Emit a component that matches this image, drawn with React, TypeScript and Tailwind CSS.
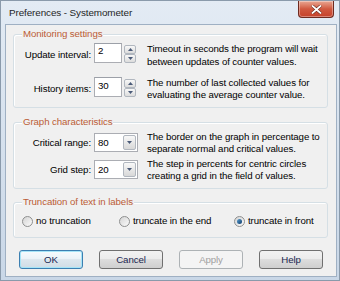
import React from "react";

function Arrow({ up }: { up?: boolean }) {
  return (
    <svg width="5" height="3" viewBox="0 0 5 3">
      <path d={up ? "M2.5 0L5 3H0z" : "M0 0H5L2.5 3z"} fill="#4a5a78" />
    </svg>
  );
}

function Spin() {
  return (
    <div className="ml-[2px] mt-[2px] flex flex-col">
      <div className="flex h-[9px] w-[12px] items-center justify-center rounded-[2px] border border-[#b1b7bf] bg-gradient-to-b from-[#f8f8f8] to-[#dcdcdc]">
        <Arrow up />
      </div>
      <div className="flex h-[9px] w-[12px] items-center justify-center rounded-[2px] border border-[#b1b7bf] bg-gradient-to-b from-[#f8f8f8] to-[#dcdcdc]">
        <Arrow />
      </div>
    </div>
  );
}

function Combo({ value }: { value: string }) {
  return (
    <div className="ml-[3px] flex h-[19px] w-[44px] items-center justify-between border border-[#abadb3] bg-white pl-[3px] pr-[1px]">
      <span className="leading-[12px]">{value}</span>
      <div className="flex h-[15px] w-[13px] items-center justify-center rounded-[2px] border border-[#b1b7bf] bg-gradient-to-b from-[#f8f8f8] to-[#d8d8d8]">
        <Arrow />
      </div>
    </div>
  );
}

function Legend({ children }: { children: React.ReactNode }) {
  return (
    <div className="-mt-[7px] ml-[8px] w-fit bg-[#f0f0f0] px-[1px] leading-[12px] text-[#bb5d36]">
      {children}
    </div>
  );
}

function Radio({ checked, label, w }: { checked?: boolean; label: string; w: string }) {
  return (
    <div className={`flex items-center ${w}`}>
      <span className="flex h-[11px] w-[11px] items-center justify-center rounded-full border border-[#8e8f8f] bg-gradient-to-br from-[#d4d4d4] to-[#fbfbfb]">
        {checked && (
          <span className="h-[5px] w-[5px] rounded-full bg-gradient-to-br from-[#5aa0d0] to-[#0d3a6a]" />
        )}
      </span>
      <span className="ml-[3px] leading-[12px]">{label}</span>
    </div>
  );
}

const btn =
  "h-[19px] w-[64px] rounded-[3px] border text-center leading-[17px]";

export default function App() {
  return (
    <div className="flex h-[281px] w-[340px] flex-col overflow-hidden border border-[#8a9aab] bg-gradient-to-b from-[#e3ebf4] to-[#c9d7e7] font-['Liberation_Sans',Arial,sans-serif] text-[9.7px] tracking-[-0.1px] text-black">
      {/* title bar */}
      <div className="flex h-[23px] items-start justify-between">
        <div className="ml-[8px] mt-[6px] text-[9.9px] leading-[12px] text-[#1e1e1e]">Preferences - Systemometer</div>
        <div className="mr-[5px] flex h-[17px] w-[36px] items-center justify-center rounded-b-[4px] border border-t-0 border-[#6e2a1f] bg-gradient-to-b from-[#e8a793] via-[#d0583f] to-[#c5412a] shadow-[inset_0_0_0_1px_rgba(255,255,255,0.35)]">
          <svg width="11" height="9" viewBox="0 0 11 9">
            <path d="M1 0.5L5.5 4.5L10 0.5M1 8.5L5.5 4.5L10 8.5" stroke="#5a1f15" strokeWidth="3" fill="none" />
            <path d="M1 0.5L5.5 4.5L10 0.5M1 8.5L5.5 4.5L10 8.5" stroke="#ffffff" strokeWidth="1.8" fill="none" />
          </svg>
        </div>
      </div>
      {/* client */}
      <div className="mb-[3px] ml-[4px] mr-[2px] flex flex-1 flex-col border border-[#9fb0c3] bg-[#f0f0f0] px-[7px] pt-[9px]">
        {/* group 1 */}
        <div className="mr-[1px] box-border h-[74px] rounded-[3px] border border-[#d5dfe5] shadow-[inset_1px_1px_0_#ffffff]">
          <Legend>Monitoring settings</Legend>
          <div className="mt-[3px] flex h-[34px] items-start">
            <div className="w-[77px] pt-[6px] text-right leading-[12px]">Update interval:</div>
            <div className="ml-[3px] h-[20px] w-[28px] border border-[#abadb3] border-t-[#9ca0a8] bg-white pl-[3px] pt-[1px] leading-[12px]">2</div>
            <Spin />
            <div className="ml-[11px] whitespace-nowrap leading-[12.5px]">
              Timeout in seconds the program will wait
              <br />
              between updates of counter values.
            </div>
          </div>
          <div className="flex items-start">
            <div className="w-[77px] pt-[6px] text-right leading-[12px]">History items:</div>
            <div className="ml-[3px] h-[20px] w-[28px] border border-[#abadb3] border-t-[#9ca0a8] bg-white pl-[3px] pt-[2px] leading-[12px]">30</div>
            <Spin />
            <div className="ml-[11px] whitespace-nowrap leading-[12px]">
              The number of last collected values for
              <br />
              evaluating the average counter value.
            </div>
          </div>
        </div>
        {/* group 2 */}
        <div className="mr-[1px] mt-[14px] box-border h-[67px] rounded-[3px] border border-[#d5dfe5] shadow-[inset_1px_1px_0_#ffffff]">
          <Legend>Graph characteristics</Legend>
          <div className="mt-[5px] flex h-[27px] items-start">
            <div className="flex h-[19px] w-[77px] items-center justify-end leading-[12px]">Critical range:</div>
            <Combo value="80" />
            <div className="-mt-[2px] ml-[9px] whitespace-nowrap leading-[11.5px]">
              The border on the graph in percentage to
              <br />
              separate normal and critical values.
            </div>
          </div>
          <div className="flex items-start">
            <div className="flex h-[19px] w-[77px] items-center justify-end leading-[12px]">Grid step:</div>
            <Combo value="20" />
            <div className="-mt-[2px] ml-[9px] whitespace-nowrap leading-[11.5px]">
              The step in percents for centric circles
              <br />
              creating a grid in the field of values.
            </div>
          </div>
        </div>
        {/* group 3 */}
        <div className="mr-[1px] mt-[13px] box-border h-[36px] rounded-[3px] border border-[#d5dfe5] shadow-[inset_1px_1px_0_#ffffff]">
          <Legend>Truncation of text in labels</Legend>
          <div className="mt-[2px] flex h-[22px] items-center pl-[8px]">
            <Radio label="no truncation" w="w-[97px]" />
            <Radio label="truncate in the end" w="w-[115px]" />
            <Radio label="truncate in front" checked w="" />
          </div>
        </div>
        {/* buttons */}
        <div className="mt-[12px] flex gap-[16px] pl-[6px]">
          <div className={`${btn} border-[#3c7fb1] bg-[linear-gradient(to_bottom,#f6fbfe_0%,#eaf2f7_50%,#dde7ee_50%,#d0dce5_100%)] text-[#1a2650] shadow-[inset_0_0_0_1px_#a6e4f7]`}>OK</div>
          <div className={`${btn} border-[#707070] bg-[linear-gradient(to_bottom,#f2f2f2_0%,#ebebeb_50%,#dddddd_50%,#cfcfcf_100%)] text-[#1a2650]`}>Cancel</div>
          <div className={`${btn} border-[#adb2b5] bg-[#f4f4f4] text-[#a0a0a0]`}>Apply</div>
          <div className={`${btn} border-[#707070] bg-[linear-gradient(to_bottom,#f2f2f2_0%,#ebebeb_50%,#dddddd_50%,#cfcfcf_100%)] text-[#1a2650]`}>Help</div>
        </div>
      </div>
    </div>
  );
}
